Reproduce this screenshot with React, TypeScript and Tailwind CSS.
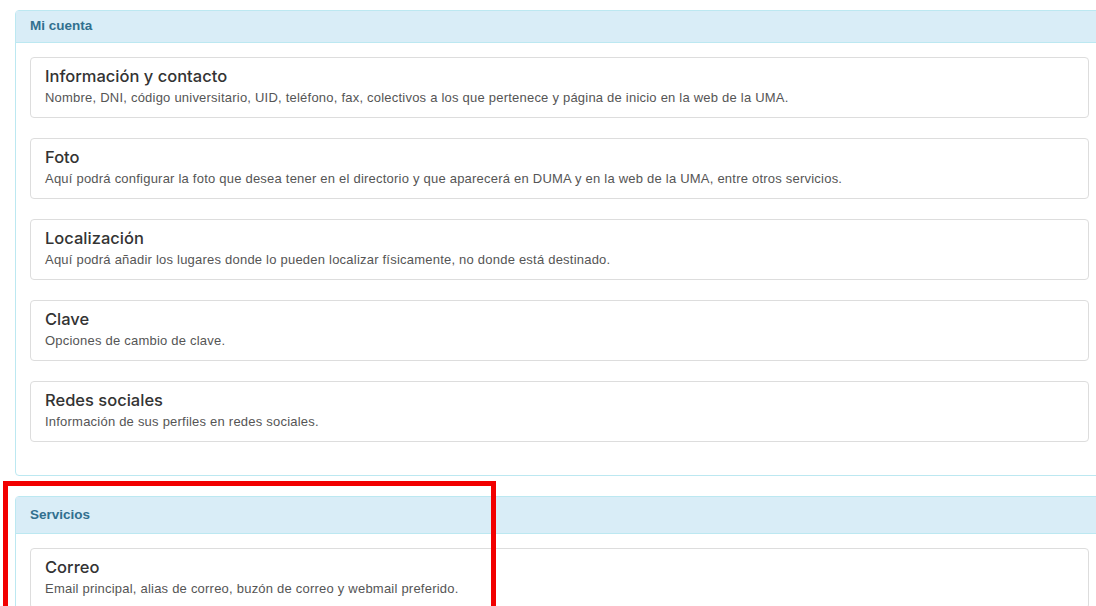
const cuenta = [
  {
    title: 'Información y contacto',
    text: 'Nombre, DNI, código universitario, UID, teléfono, fax, colectivos a los que pertenece y página de inicio en la web de la UMA.',
  },
  {
    title: 'Foto',
    text: 'Aquí podrá configurar la foto que desea tener en el directorio y que aparecerá en DUMA y en la web de la UMA, entre otros servicios.',
  },
  {
    title: 'Localización',
    text: 'Aquí podrá añadir los lugares donde lo pueden localizar físicamente, no donde está destinado.',
  },
  { title: 'Clave', text: 'Opciones de cambio de clave.' },
  { title: 'Redes sociales', text: 'Información de sus perfiles en redes sociales.' },
];

const servicios = [
  { title: 'Correo', text: 'Email principal, alias de correo, buzón de correo y webmail preferido.' },
];

function Item({ title, text }: { title: string; text: string }) {
  return (
    <div className="rounded-[4px] border border-[#dddddd] bg-white px-[14px] pt-[8px] pb-[11px]">
      <h4 className="mb-[4px] font-['Inter',sans-serif] text-[16.5px] leading-[20px] font-medium text-[#333333]">{title}</h4>
      <p className="text-[13px] leading-[16px] tracking-[0.22px] text-[#555555]">{text}</p>
    </div>
  );
}

function Panel({ heading, items, headH }: { heading: string; items: { title: string; text: string }[]; headH: string }) {
  return (
    <div className="w-[1089px] rounded-[4px] border border-[#bce8f1] bg-white">
      <div className={`flex items-center border-b border-[#bce8f1] bg-[#d9edf7] px-[14px] text-[13.5px] font-bold text-[#31708f] ${headH}`}>
        {heading}
      </div>
      <div className="flex flex-col gap-[20px] px-[14px] pt-[14px] pb-[33px]">
        {items.map((it) => (
          <Item key={it.title} {...it} />
        ))}
      </div>
    </div>
  );
}

export default function App() {
  return (
    <div className="relative h-[606px] w-[1096px] overflow-hidden bg-white font-['Liberation_Sans',Arial,sans-serif]">
      <div className="flex flex-col gap-[20px] pt-[10px] pl-[15px]">
        <Panel heading="Mi cuenta" items={cuenta} headH="h-[32px]" />
        <Panel heading="Servicios" items={servicios} headH="h-[37px]" />
      </div>
      {/* highlight box */}
      <div className="pointer-events-none absolute top-[481px] left-[3px] h-[130px] w-[493px] border-[5px] border-[#f20000]" />
    </div>
  );
}
